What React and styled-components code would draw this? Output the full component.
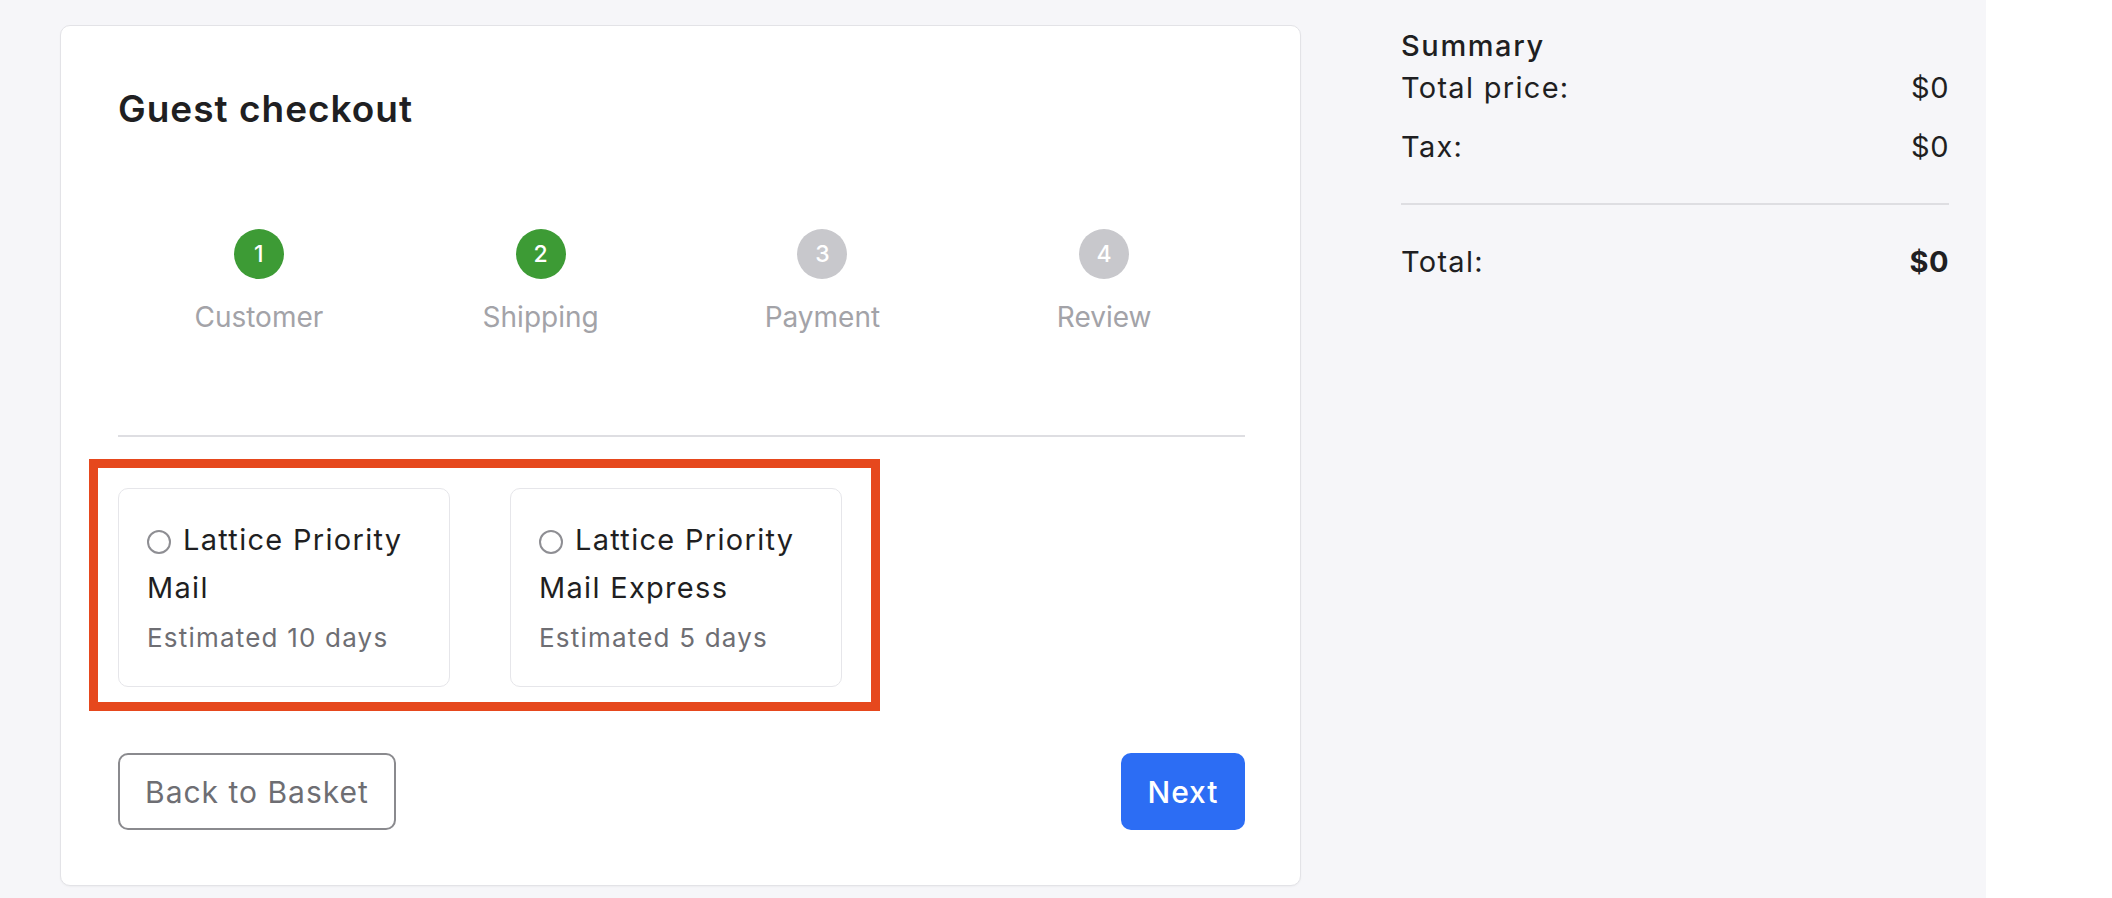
import React from "react";
import styled, { createGlobalStyle } from "styled-components";

const GlobalStyle = createGlobalStyle`
  html, body { margin: 0; padding: 0; background: #ffffff; }
  body { font-family: Inter, "Noto Sans", "Liberation Sans", sans-serif; -webkit-font-smoothing: antialiased; }
  *, *::before, *::after { box-sizing: border-box; }
`;

const Page = styled.div`
  display: flex;
  align-items: flex-start;
  gap: 100px;
  width: 1986px;
  min-height: 898px;
  padding: 25px 37px 0 60px;
  background: #f6f6f9;
`;

const Card = styled.section`
  width: 1241px;
  flex: none;
  background: #ffffff;
  border: 1px solid #e3e3e7;
  border-radius: 10px;
  box-shadow: 0 1px 2px rgba(0, 0, 0, 0.04);
  padding: 60px 55px 55px 57px;
`;

const Title = styled.h1`
  margin: 0;
  font-size: 37px;
  line-height: 45px;
  font-weight: 600;
  letter-spacing: 1px;
  color: #1f1f22;
`;

const Stepper = styled.ol`
  list-style: none;
  margin: 98px 0 0;
  padding: 0;
  display: grid;
  grid-template-columns: repeat(4, 1fr);
`;

const Step = styled.li`
  display: flex;
  flex-direction: column;
  align-items: center;
  gap: 20px;
`;

const StepCircle = styled.span`
  width: 50px;
  height: 50px;
  border-radius: 50%;
  background: ${(p) => (p.$done ? "#3d9b35" : "#c8c8cc")};
  color: #ffffff;
  font-size: 23px;
  font-weight: 500;
  display: flex;
  align-items: center;
  justify-content: center;
`;

const StepLabel = styled.span`
  font-size: 28px;
  line-height: 36px;
  color: #a3a3a8;
`;

const Divider = styled.hr`
  border: none;
  height: 2px;
  flex: none;
  background: #dedee2;
  margin: ${(p) => p.$margin};
`;

const OptionsRow = styled.div`
  position: relative;
  display: grid;
  grid-template-columns: repeat(3, 332px);
  gap: 60px;
  margin-top: 51px;
`;

const Highlight = styled.div`
  position: absolute;
  top: -29px;
  left: -29px;
  width: 791px;
  height: 252px;
  border: 9px solid #e6481d;
  pointer-events: none;
`;

const OptionCard = styled.label`
  display: block;
  border: 1px solid #e6e6ea;
  border-radius: 10px;
  background: #ffffff;
  padding: 27px 20px 28px 28px;
  cursor: pointer;
`;

const OptionTitle = styled.div`
  font-size: 29px;
  line-height: 48px;
  letter-spacing: 1.3px;
  color: #1f1f22;
`;

const Radio = styled.span`
  display: inline-block;
  width: 24px;
  height: 24px;
  border: 2px solid #8e8e93;
  border-radius: 50%;
  vertical-align: -4px;
  margin-right: 12px;
`;

const OptionSub = styled.div`
  margin-top: 6px;
  font-size: 26px;
  line-height: 40px;
  letter-spacing: 1.2px;
  color: #6e6e73;
`;

const ButtonRow = styled.div`
  display: flex;
  justify-content: space-between;
  margin-top: 66px;
`;

const BaseButton = styled.button`
  height: 77px;
  border-radius: 10px;
  font-family: inherit;
  font-size: 30px;
  letter-spacing: 1px;
  cursor: pointer;
`;

const BackButton = styled(BaseButton)`
  padding: 0 25px;
  background: #ffffff;
  border: 2px solid #8a8a8e;
  color: #6e6e73;
`;

const NextButton = styled(BaseButton)`
  width: 124px;
  border: none;
  background: #2c6df4;
  color: #ffffff;
  font-weight: 500;
`;

const Summary = styled.aside`
  width: 548px;
  flex: none;
  display: flex;
  flex-direction: column;
  color: #1f1f22;
`;

const SummaryTitle = styled.div`
  font-size: 29px;
  line-height: 42px;
  font-weight: 500;
  letter-spacing: 1.6px;
`;

const SummaryRow = styled.div`
  display: flex;
  justify-content: space-between;
  font-size: 29px;
  line-height: 42px;
  letter-spacing: 1.3px;
  margin-bottom: ${(p) => (p.$last ? "0" : "17px")};
`;

const Amount = styled.span`
  font-weight: ${(p) => (p.$bold ? 700 : 400)};
  letter-spacing: 0.5px;
`;

const steps = [
  { n: 1, label: "Customer", done: true },
  { n: 2, label: "Shipping", done: true },
  { n: 3, label: "Payment", done: false },
  { n: 4, label: "Review", done: false },
];

const options = [
  { title: "Lattice Priority Mail", eta: "Estimated 10 days" },
  { title: "Lattice Priority Mail Express", eta: "Estimated 5 days" },
];

export default function App() {
  return (
    <>
      <GlobalStyle />
      <Page>
        <Card>
          <Title>Guest checkout</Title>
          <Stepper>
            {steps.map((s) => (
              <Step key={s.n}>
                <StepCircle $done={s.done}>{s.n}</StepCircle>
                <StepLabel>{s.label}</StepLabel>
              </Step>
            ))}
          </Stepper>
          <Divider $margin="100px 0 0" />
          <OptionsRow>
            {options.map((o) => (
              <OptionCard key={o.title}>
                <OptionTitle>
                  <Radio />
                  {o.title}
                </OptionTitle>
                <OptionSub>{o.eta}</OptionSub>
              </OptionCard>
            ))}
            <Highlight />
          </OptionsRow>
          <ButtonRow>
            <BackButton>Back to Basket</BackButton>
            <NextButton>Next</NextButton>
          </ButtonRow>
        </Card>
        <Summary>
          <SummaryTitle>Summary</SummaryTitle>
          <SummaryRow>
            <span>Total price:</span>
            <Amount>$0</Amount>
          </SummaryRow>
          <SummaryRow>
            <span>Tax:</span>
            <Amount>$0</Amount>
          </SummaryRow>
          <Divider $margin="18px 0 36px" />
          <SummaryRow $last>
            <span>Total:</span>
            <Amount $bold>$0</Amount>
          </SummaryRow>
        </Summary>
      </Page>
    </>
  );
}
